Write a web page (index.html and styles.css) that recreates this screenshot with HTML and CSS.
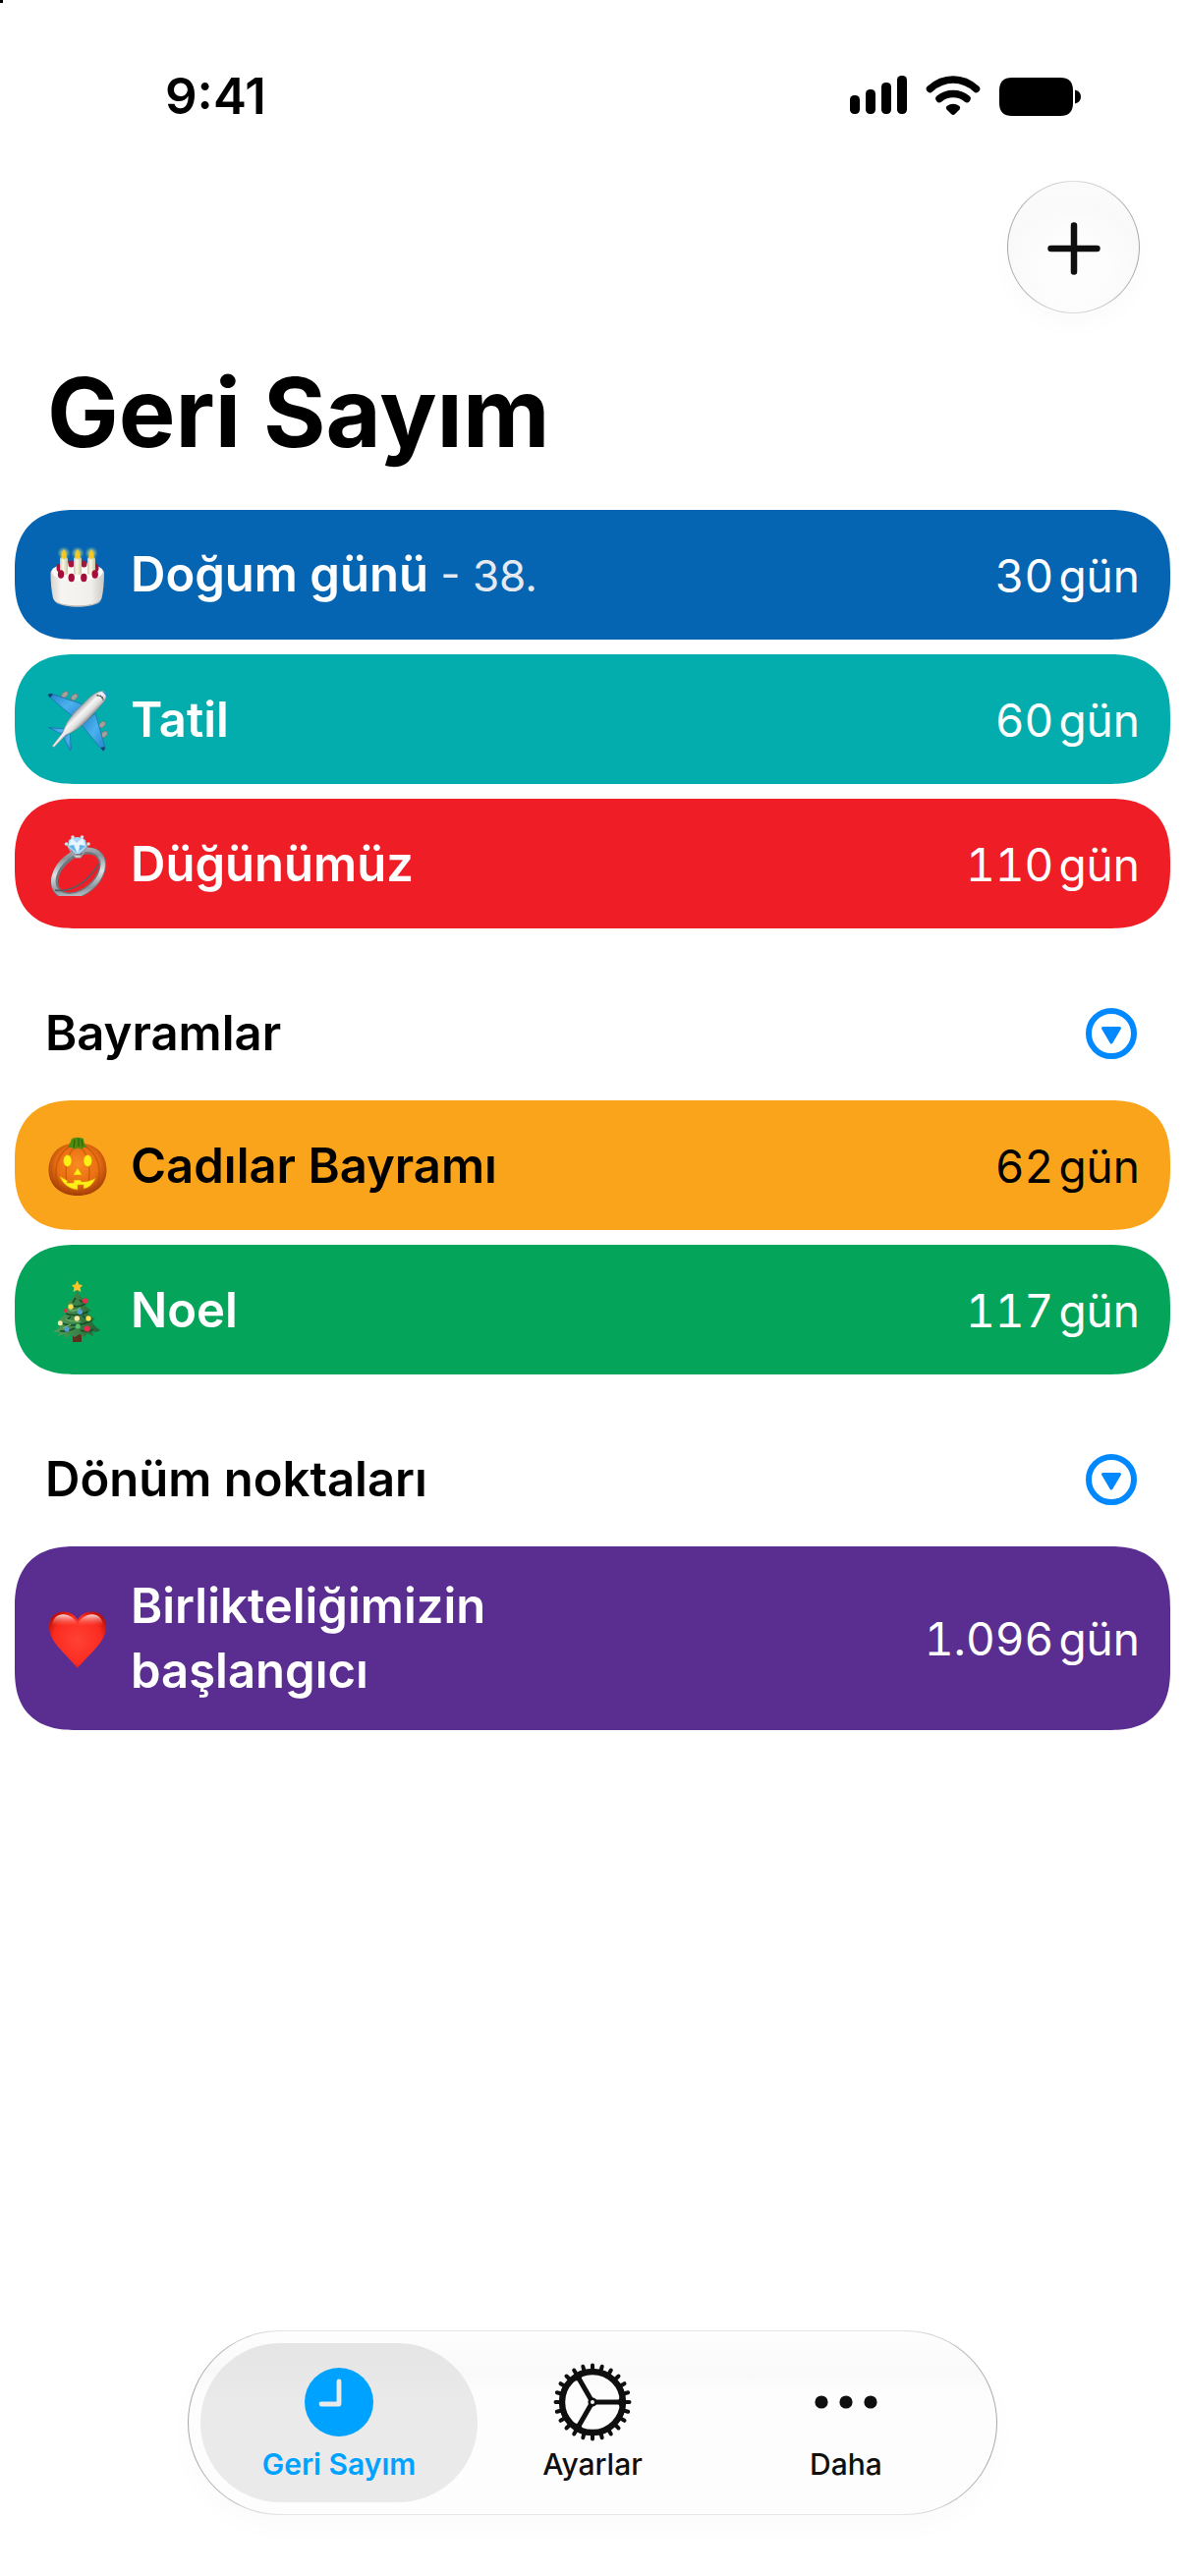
FILE: index.html
```html
<!DOCTYPE html>
<html lang="tr">
<head>
<meta charset="utf-8">
<meta name="viewport" content="width=device-width, initial-scale=1">
<title>Geri Sayım</title>
<link rel="stylesheet" href="styles.css">
</head>
<body>
<div class="app">
  <div class="status">
    <span class="status-time">9:41</span>
    <span class="status-icons">
      <svg width="58" height="42" viewBox="0 0 58 42" aria-hidden="true">
        <rect x="0" y="20" width="10" height="19" rx="4.500"/>
        <rect x="16" y="14" width="10" height="25" rx="4.500"/>
        <rect x="32" y="7" width="10" height="32" rx="4.500"/>
        <rect x="48" y="0" width="10" height="39" rx="4.500"/>
      </svg>
      <svg width="56" height="42" viewBox="0 0 56 42" aria-hidden="true">
        <path d="M4.500 13.500Q15 4 28 4T51.500 13.500" fill="none" stroke="#000" stroke-width="7.500" stroke-linecap="round"/>
        <path d="M14 23.500Q20 18.500 28 18.500T42 23.500" fill="none" stroke="#000" stroke-width="7.500" stroke-linecap="round"/>
        <path d="M21.500 31Q28 26.500 34.500 31Q36 32.500 34.500 34.500L30 39Q28 41 26 39L21.500 34.500Q20 32.500 21.500 31Z"/>
      </svg>
      <svg width="84" height="42" viewBox="0 0 84 42" aria-hidden="true">
        <path d="M13 2H62Q75 2 75 15V28Q75 41 62 41H13Q0 41 0 28V15Q0 2 13 2Z"/>
        <path d="M77 14.500Q83 16 83 21.500T77 28.500Z"/>
      </svg>
    </span>
  </div>

  <header class="toolbar">
    <button class="add" type="button" aria-label="Ekle">
      <svg width="54" height="54" viewBox="0 0 54 54" aria-hidden="true"><path d="M27 3.500V50.500M3.500 27H50.500" stroke="#0f0f0f" stroke-width="6.500" stroke-linecap="round"/></svg>
    </button>
  </header>

  <main class="content">
    <h1 class="title">Geri Sayım</h1>

    <ul class="list">
      <li class="card card-blue">
        <svg class="emoji" viewBox="0 0 64 64" aria-hidden="true">
          <defs>
            <linearGradient id="cakeSide" x1="0" x2="1"><stop offset="0" stop-color="#d8d4cf"/><stop offset=".2" stop-color="#f7f5f2"/><stop offset=".75" stop-color="#f1efec"/><stop offset="1" stop-color="#cdc9c3"/></linearGradient>
            <linearGradient id="candle" x1="0" x2="1"><stop offset="0" stop-color="#cfc8ae"/><stop offset=".4" stop-color="#fbf8e6"/><stop offset="1" stop-color="#c9c2a6"/></linearGradient>
            <radialGradient id="glow"><stop offset="0" stop-color="#fff27a" stop-opacity=".95"/><stop offset=".5" stop-color="#b5cf8c" stop-opacity=".6"/><stop offset="1" stop-color="#5f9cae" stop-opacity="0"/></radialGradient>
          </defs>
          <path d="M4.500 29C5 17 58 17 59 29Q59 44 56.500 55C54 65.500 9.500 65.500 7 55Q4.500 44 4.500 29Z" fill="url(#cakeSide)"/>
          <path d="M8 57C16 64 48 64 56 57C52 66 12 66 8 57Z" fill="#c2beb8"/>
          <ellipse cx="31.700" cy="28" rx="26" ry="9.500" fill="#fbfaf8"/>
          <g fill="#a3143f"><ellipse cx="25.500" cy="20" rx="3" ry="3.500"/><ellipse cx="38.500" cy="20" rx="3" ry="3.500"/><ellipse cx="13" cy="24" rx="2.500" ry="4"/><ellipse cx="51" cy="24" rx="2.500" ry="4"/></g>
          <g fill="url(#candle)"><rect x="14" y="13" width="8" height="18" rx="2"/><rect x="28" y="13" width="8" height="18" rx="2"/><rect x="42" y="13" width="8" height="18" rx="2"/></g>
          <g fill="#a50d3b"><ellipse cx="15" cy="30.500" rx="3.200" ry="4.200"/><ellipse cx="25.700" cy="34" rx="3.200" ry="4.200"/><ellipse cx="38.300" cy="34" rx="3.200" ry="4.200"/><ellipse cx="49.700" cy="30.500" rx="3.200" ry="4.200"/></g>
          <g fill="url(#glow)"><circle cx="18" cy="9" r="7"/><circle cx="32" cy="9" r="7"/><circle cx="46" cy="9" r="7"/></g>
          <path d="M18 5q5.500 9 0 10q-5.500-1 0-10ZM32 5q5.500 9 0 10q-5.500-1 0-10ZM46 5q5.500 9 0 10q-5.500-1 0-10Z" fill="#f7c81e"/>
        </svg>
        <span class="name">Doğum günü <span class="ordinal">- 38.</span></span>
        <span class="days"><span>30</span><span>gün</span></span>
      </li>
      <li class="card card-teal">
        <svg class="emoji" viewBox="0 0 64 64" aria-hidden="true">
          <defs>
            <linearGradient id="hull" gradientUnits="userSpaceOnUse" x1="34" y1="18" x2="46" y2="30"><stop offset="0" stop-color="#9c9c9c"/><stop offset=".35" stop-color="#f6f6f6"/><stop offset=".65" stop-color="#dedede"/><stop offset="1" stop-color="#777"/></linearGradient>
            <linearGradient id="wing" x1="0" y1="0" x2="1" y2="1"><stop offset="0" stop-color="#2380c8"/><stop offset=".5" stop-color="#4ab2ee"/><stop offset="1" stop-color="#2380c8"/></linearGradient>
          </defs>
          <g fill="#a3a09e" stroke="#6e6c6a" stroke-width=".6"><ellipse cx="19" cy="6" rx="2.600" ry="4" transform="rotate(48 19 6)"/><ellipse cx="28.700" cy="8.500" rx="2.600" ry="4" transform="rotate(48 28.700 8.500)"/><ellipse cx="57" cy="36.500" rx="2.600" ry="4" transform="rotate(48 57 36.500)"/><ellipse cx="59" cy="46.500" rx="2.600" ry="4" transform="rotate(48 59 46.500)"/></g>
          <g fill="url(#wing)" stroke="#1c6ca8" stroke-width=".7" stroke-linejoin="round">
            <path d="M2 7Q2 5 5 5L40 17L29 30Z"/>
            <path d="M50 25L60 60Q60 63 57.500 63L36 37Z"/>
            <path d="M2.500 39.500L21 41L17 47Z"/>
            <path d="M24 45L25.500 61.500L24 62.500L17 48Z"/>
          </g>
          <path d="M2 7Q2 5 5 5L7 6L4 9ZM59.500 59Q60 63 57.500 63L55.500 60Z" fill="#174069"/>
          <path d="M60.500 3.500Q63.500 8 57 15.500L42 32Q31 43 20 47L8 59.500L6 58.500L17 44.500Q20 34 29 24L45 8Q55 0 60.500 3.500Z" fill="url(#hull)" stroke="#777" stroke-width=".4"/>
          <path d="M57 3Q61 2.500 62 5T61.500 9Q60 5 57 3Z" fill="#1f8fd8"/>
          <path d="M51.500 7Q57 6.500 58 11.500" fill="none" stroke="#333" stroke-width="1.300" stroke-dasharray="2 .6"/>
        </svg>
        <span class="name">Tatil</span>
        <span class="days"><span>60</span><span>gün</span></span>
      </li>
      <li class="card card-red">
        <svg class="emoji" viewBox="0 0 64 64" aria-hidden="true">
          <defs>
            <linearGradient id="band" x1="0" y1="1" x2="1" y2="0"><stop offset="0" stop-color="#e6eaee"/><stop offset=".25" stop-color="#8d959d"/><stop offset=".5" stop-color="#dfe3e6"/><stop offset=".75" stop-color="#8b9197"/><stop offset="1" stop-color="#c3c8cc"/></linearGradient>
          </defs>
          <ellipse cx="33" cy="41" rx="28" ry="18.500" transform="rotate(-40 33 41)" fill="none" stroke="#70787f" stroke-width="7"/>
          <ellipse cx="32.500" cy="40.500" rx="28.500" ry="19.500" transform="rotate(-40 32.500 40.500)" fill="none" stroke="url(#band)" stroke-width="4.500"/>
          <path d="M9 58Q19 60 31 54T54 31" fill="none" stroke="#565d64" stroke-width="1.500"/>
          <path d="M20 10L28 22L36 23L43 10L39 19L35 25H30L25 19Z" fill="#d4dade" stroke="#959ca2" stroke-width="1"/>
          <path d="M23 7Q31.500 1 40 7L41 14L34 21H30L22 14Z" fill="#a9d8fa"/>
          <path d="M26 5L31 10L37 5L40 13L34 12L32 20L28 12L23 13Z" fill="#e8f7ff"/>
          <path d="M23 13L28 12L31 20ZM34 12L40 13L34 18Z" fill="#65b3ea"/>
          <g fill="#d7dce0"><circle cx="27" cy="4" r="1.800"/><circle cx="36.500" cy="4" r="1.800"/><circle cx="20.500" cy="11" r="1.800"/><circle cx="43" cy="11" r="1.800"/></g>
        </svg>
        <span class="name">Düğünümüz</span>
        <span class="days"><span>110</span><span>gün</span></span>
      </li>
    </ul>

    <section class="group">
      <div class="group-head">
        <h2 class="group-title">Bayramlar</h2>
        <button class="toggle" type="button" aria-label="Bayramlar bölümünü daralt">
          <svg width="52" height="52" viewBox="0 0 52 52" aria-hidden="true"><circle cx="26" cy="26" r="23" fill="none" stroke="#0088ff" stroke-width="6"/><path d="M17.500 20.500H34.500L26 35Z" fill="#0088ff" stroke="#0088ff" stroke-width="3" stroke-linejoin="round"/></svg>
        </button>
      </div>
      <ul class="list">
        <li class="card card-orange">
          <svg class="emoji" viewBox="0 0 64 64" aria-hidden="true">
            <defs><radialGradient id="pumpkin" cx=".5" cy=".4" r=".6"><stop offset="0" stop-color="#fb8a22"/><stop offset=".6" stop-color="#ea6f12"/><stop offset="1" stop-color="#a03c06"/></radialGradient></defs>
            <path d="M32 10C46 6 61.500 17 61.500 36C61.500 52 49 62 32 62S2.500 52 2.500 36C2.500 17 18 6 32 10Z" fill="url(#pumpkin)"/>
            <path d="M24 12Q11 20 10 36T20 60M40 12Q53 20 54 36T44 60M29 12Q20 22 20 38T27 61M35 12Q44 22 44 38T37 61" fill="none" stroke="#b64c08" stroke-width="1.400" opacity=".6"/>
            <path d="M22 13Q25 7 26 4Q32 1.500 38 4Q38 9 42 13Q37 12 36 15Q32 12 29 15Q26 12 22 13Z" fill="#4f8a12"/>
            <path d="M29 5L28 13M33 4V12M36 5L37 12" stroke="#2f6208" stroke-width="1.200"/>
            <g fill="#fdf017" stroke="#e08a08" stroke-width=".6">
              <ellipse cx="21.700" cy="26.500" rx="4.300" ry="6"/><ellipse cx="42.300" cy="26.500" rx="4.300" ry="6"/>
              <path d="M32 33.500L36.500 41H27.500Z"/>
              <path d="M13.500 42L22 47L21 49H28V46H35L36 48Q44 48 50.500 44Q46 54 38 55V51H32V56Q19 55 13.500 42Z"/>
            </g>
          </svg>
          <span class="name">Cadılar Bayramı</span>
          <span class="days"><span>62</span><span>gün</span></span>
        </li>
        <li class="card card-green">
          <svg class="emoji" viewBox="0 0 64 64" aria-hidden="true">
            <defs><linearGradient id="fir" x1="0" x2="1"><stop offset="0" stop-color="#54a05a"/><stop offset=".5" stop-color="#3a8448"/><stop offset="1" stop-color="#225f33"/></linearGradient></defs>
            <rect x="27" y="53" width="9" height="11" fill="#5a3220"/>
            <path d="M31.500 11Q34 19 43 24L38 25Q42 30 46 32L41 33Q45 38 50 41L45 42Q49 48 55 52Q51 55 47 53L48 58L41 55L40 59L34 56L29 59L25 56L20 60L18 56L12 58L14 54L7 54Q14 50 17 43L11 43Q18 38 20 34L16 34Q22 30 24 25L20 25Q28 21 31.500 11Z" fill="url(#fir)"/>
            <path d="M24 26Q32 30 40 25M20 35Q31 39 43 33M16 45Q30 50 47 42M14 53Q24 53 29 50M35 52Q43 55 48 51M30 19L27 24M34 21L37 24M25 38L21 42M37 37L41 41" fill="none" stroke="#174e2b" stroke-width="1.700"/>
            <path d="M23 31Q29 34 35 29M20 41Q28 44 35 43M17 50L25 46" fill="none" stroke="#74b66a" stroke-width="1.200"/>
            <path d="M31.500 1.500L33.500 5.500L37 6L34.500 9L35.500 13L31.500 11L27.500 13L28.500 9L26 6L29.500 5.500Z" fill="#fbc326"/>
            <g><circle cx="39.700" cy="22" r="2.700" fill="#e32e4c"/><circle cx="19.700" cy="32" r="2" fill="#e32e4c"/><circle cx="41.700" cy="50.500" r="2.900" fill="#e32e4c"/><circle cx="25" cy="28" r="2.700" fill="#f8e04f"/><circle cx="43" cy="40" r="2.700" fill="#f8e04f"/><circle cx="31.300" cy="40" r="2.700" fill="#f8eba6"/><circle cx="14.300" cy="44.700" r="2.500" fill="#f8eba6"/><circle cx="34.300" cy="33.300" r="2.700" fill="#579bdd"/><circle cx="21" cy="51" r="2.500" fill="#579bdd"/><circle cx="32.300" cy="48" r="2.500" fill="#58c273"/></g>
          </svg>
          <span class="name">Noel</span>
          <span class="days"><span>117</span><span>gün</span></span>
        </li>
      </ul>
    </section>

    <section class="group">
      <div class="group-head">
        <h2 class="group-title">Dönüm noktaları</h2>
        <button class="toggle" type="button" aria-label="Dönüm noktaları bölümünü daralt">
          <svg width="52" height="52" viewBox="0 0 52 52" aria-hidden="true"><circle cx="26" cy="26" r="23" fill="none" stroke="#0088ff" stroke-width="6"/><path d="M17.500 20.500H34.500L26 35Z" fill="#0088ff" stroke="#0088ff" stroke-width="3" stroke-linejoin="round"/></svg>
        </button>
      </div>
      <ul class="list">
        <li class="card card-purple">
          <svg class="emoji" viewBox="0 0 64 64" aria-hidden="true">
            <defs>
              <radialGradient id="heart" cx=".5" cy=".5" r=".6"><stop offset="0" stop-color="#ff4234"/><stop offset=".7" stop-color="#fb2b20"/><stop offset="1" stop-color="#b90d05"/></radialGradient>
              <linearGradient id="shine" x1="0" y1="0" x2="0" y2="1"><stop offset="0" stop-color="#fff" stop-opacity=".85"/><stop offset=".7" stop-color="#ff6a5c" stop-opacity="0"/></linearGradient>
            </defs>
            <path d="M32 13C37 1 61 0 61 20C61 35 45 46 32 62C19 46 3 35 3 20C3 0 27 1 32 13Z" fill="url(#heart)"/>
            <path d="M32 18C36 5 57 2 58 19C50 26 40 22 32 24C24 22 14 26 6 19C7 2 28 5 32 18Z" fill="url(#shine)"/>
          </svg>
          <span class="name">Birlikteliğimizin<br>başlangıcı</span>
          <span class="days"><span>1.096</span><span>gün</span></span>
        </li>
      </ul>
    </section>
  </main>

  <nav class="tabs">
    <a class="tab tab-active" href="#geri-sayim" aria-current="page">
      <svg width="80" height="80" viewBox="-40 -40 80 80" aria-hidden="true"><circle r="35" fill="#00a2ff"/><path d="M0-21V2H-18" fill="none" stroke="#eaeaea" stroke-width="4.800" stroke-linecap="round" stroke-linejoin="round"/></svg>
      <span>Geri Sayım</span>
    </a>
    <a class="tab" href="#ayarlar">
      <svg width="80" height="80" viewBox="-40 -40 80 80" aria-hidden="true">
        <defs><mask id="gearRim"><rect x="-40" y="-40" width="80" height="80" fill="#fff"/><circle r="31" fill="#000"/></mask></defs>
        <path mask="url(#gearRim)" d="M37.500 0H-37.500M0 37.500V-37.500M36.200 9.700L-36.200-9.700M32.500 18.800L-32.500-18.800M26.500 26.500L-26.500-26.500M18.800 32.500L-18.800-32.500M9.700 36.200L-9.700-36.200M-36.200 9.700L36.200-9.700M-32.500 18.800L32.500-18.800M-26.500 26.500L26.500-26.500M-18.800 32.500L18.800-32.500M-9.700 36.200L9.700-36.200" stroke="#0f0f0f" stroke-width="4" stroke-linecap="round"/>
        <circle r="31" fill="none" stroke="#0f0f0f" stroke-width="6.400"/>
        <path d="M3 0H30M-1.500-2.600L-15-26M-1.500 2.600L-15 26" stroke="#0f0f0f" stroke-width="5"/>
        <path d="M28-5L32 0L28 5L25 0ZM-18.300-21.700L-10-27L-12.500-21.700ZM-18.300 21.700L-10 27L-12.500 21.700Z" fill="#0f0f0f"/>
        <circle r="3.300" fill="#fff" stroke="#0f0f0f" stroke-width="2.600"/>
      </svg>
      <span>Ayarlar</span>
    </a>
    <a class="tab" href="#daha">
      <svg width="80" height="80" viewBox="-40 -40 80 80" fill="#0f0f0f" aria-hidden="true"><circle cx="-25" r="6.600"/><circle r="6.600"/><circle cx="25" r="6.600"/></svg>
      <span>Daha</span>
    </a>
  </nav>
</div>
</body>
</html>
```
FILE: styles.css
```css
* {
  box-sizing: border-box;
}

body {
  margin: 0;
  background: #fff;
  color: #000;
  font-family: Inter, "Liberation Sans", sans-serif;
}

/* small black mark in the window's corner */
body::before {
  content: "";
  position: absolute;
  top: 0;
  left: 0;
  width: 3px;
  height: 3px;
  background: #000;
}

svg {
  display: block;
}

.app {
  display: flex;
  flex-direction: column;
  min-height: 100vh;
}

.status {
  display: flex;
  justify-content: space-between;
  align-items: center;
  height: 184px;
  padding: 12px 105px 0 168px;
}

.status-time {
  font-size: 51px;
  font-weight: 600;
  line-height: 60px;
}

.status-icons {
  display: flex;
  align-items: center;
  gap: 19px;
}

.toolbar {
  display: flex;
  justify-content: flex-end;
  padding: 0 46px;
}

.add {
  display: flex;
  align-items: center;
  justify-content: center;
  width: 135px;
  height: 135px;
  padding: 2px 0 0;
  border: 1px solid transparent;
  border-radius: 50%;
  background:
    radial-gradient(circle at 50% 68%, #fdfdfd 30%, #f9f9f9 60%, #fdfdfd 100%) padding-box,
    linear-gradient(90deg, #a8a8a8, #dedede 50%, #a8a8a8) border-box;
  box-shadow: 0 12px 24px rgba(0, 0, 0, .02);
}

.content {
  flex: 1;
  padding: 0 15px;
}

.title {
  margin: 0;
  padding: 41px 33px 39px;
  font-size: 97px;
  font-weight: 700;
  line-height: 120px;
}

.list {
  display: flex;
  flex-direction: column;
  gap: 15px;
  margin: 0;
  padding: 0;
  list-style: none;
}

.card {
  display: flex;
  align-items: center;
  min-height: 132px;
  padding: 28px 31px 27px 32px;
  border-radius: 56px;
  color: #fff;
}

@supports (corner-shape: superellipse(1.3)) {
  .card {
    border-radius: 62px;
    corner-shape: superellipse(1.3);
  }
}

.card-blue { background: #0565b3; }
.card-teal { background: #04adad; }
.card-red { background: #ef1d25; }
.card-orange { background: #faa41c; color: #000; }
.card-green { background: #05a45b; }
.card-purple { background: #5a2e91; }

.emoji {
  flex: none;
  width: 64px;
  height: 64px;
  margin-right: 22px;
}

.name {
  flex: 1;
  font-size: 49px;
  font-weight: 600;
  line-height: 66px;
}

.ordinal {
  color: #e6eaf0;
  font-size: 44px;
  font-weight: 400;
}

.days {
  display: flex;
  gap: 5px;
  font-size: 46px;
  line-height: 66px;
  font-variant-numeric: tabular-nums;
}

.group-head {
  display: flex;
  align-items: center;
  justify-content: space-between;
  height: 175px;
  padding: 42px 34px 0 31px;
}

.group-title {
  margin: 0;
  font-size: 49px;
  font-weight: 600;
  line-height: 66px;
}

.group-head {
  padding-bottom: 3px;
}

.toggle {
  padding: 0;
  border: 0;
  background: none;
}

.tabs {
  display: flex;
  width: 824px;
  max-width: 100%;
  margin: 0 auto 62px;
  padding: 12px;
  border: 1px solid transparent;
  border-radius: 94px;
  background:
    linear-gradient(#fefefe, #f9f9f9 22%, #fdfdfd 34%) padding-box,
    linear-gradient(90deg, #a8a8a8, #e6e6e6 12%, #e6e6e6 88%, #a8a8a8) border-box;
  box-shadow: 0 12px 30px rgba(0, 0, 0, .02);
}

.tab {
  flex: 1;
  display: flex;
  flex-direction: column;
  align-items: center;
  padding: 20px 0 16px;
  border-radius: 81px;
  color: #0f0f0f;
  font-size: 30px;
  font-weight: 500;
  line-height: 46px;
  text-decoration: none;
}

.tab + .tab {
  margin-left: -24px;
}

.tab-active {
  background: linear-gradient(#e5e5e5, #eaeaea 40%);
  color: #00a2ff;
  font-weight: 600;
}
```
